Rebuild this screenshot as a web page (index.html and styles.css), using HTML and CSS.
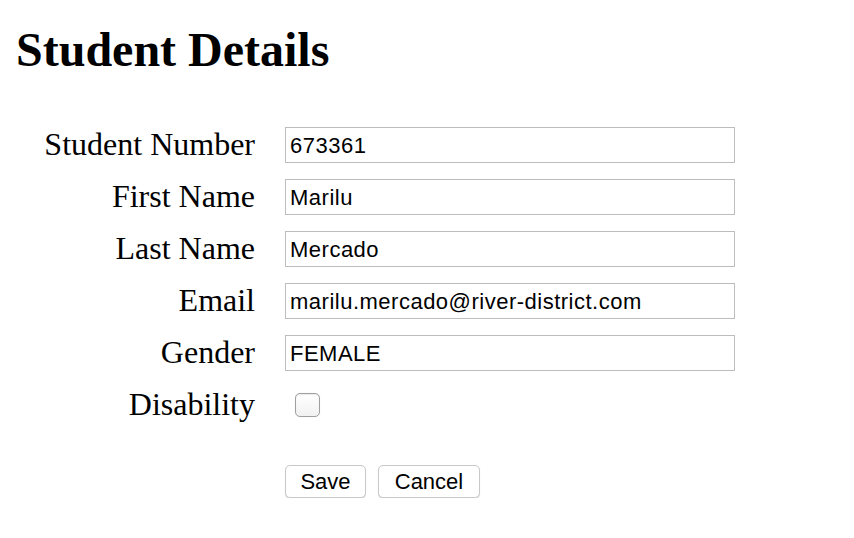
FILE: index.html
```html
<!DOCTYPE html>
<html lang="en">
<head>
<meta charset="utf-8">
<title>Student Details</title>
<link rel="stylesheet" href="styles.css">
</head>
<body>
<h1 class="title">Student Details</h1>
<form class="form">
  <label class="label" for="num">Student Number</label>
  <input class="field" id="num" type="text" value="673361">
  <label class="label" for="first">First Name</label>
  <input class="field" id="first" type="text" value="Marilu">
  <label class="label" for="last">Last Name</label>
  <input class="field" id="last" type="text" value="Mercado">
  <label class="label" for="email">Email</label>
  <input class="field" id="email" type="text" value="marilu.mercado@river-district.com">
  <label class="label" for="gender">Gender</label>
  <input class="field" id="gender" type="text" value="FEMALE">
  <label class="label" for="dis">Disability</label>
  <div class="check-cell"><input class="check" id="dis" type="checkbox"></div>
  <div class="actions">
    <button class="btn btn-save" type="button">Save</button>
    <button class="btn btn-cancel" type="button">Cancel</button>
  </div>
</form>
</body>
</html>
```
FILE: styles.css
```css
html, body {
  margin: 0;
  padding: 0;
  background: #ffffff;
}
body {
  padding: 0 0 0 16px;
  font-family: "Liberation Serif", "Times New Roman", serif;
  color: #000;
}
.title {
  margin: 0;
  padding-top: 22px;
  font-size: 48px;
  line-height: 56px;
  font-weight: bold;
}
.form {
  display: grid;
  grid-template-columns: 239px 450px;
  column-gap: 30px;
  row-gap: 16px;
  margin-top: 49px;
}
.label {
  align-self: start;
  text-align: right;
  font-size: 32px;
  line-height: 34px;
}
.field {
  box-sizing: border-box;
  width: 450px;
  height: 36px;
  margin: 0;
  padding: 2px 4px 0 4px;
  border: 1px solid #bdbdbd;
  border-radius: 0;
  font-family: "Liberation Sans", Arial, sans-serif;
  font-size: 22px;
  letter-spacing: 0.5px;
  color: #000;
  background: #fff;
  outline: none;
}
.check-cell {
  height: 36px;
  display: flex;
  align-items: center;
}
.check {
  appearance: none;
  -webkit-appearance: none;
  box-sizing: border-box;
  width: 25px;
  height: 24px;
  margin: 0 0 0 10px;
  border: 1px solid #9f9f9f;
  border-radius: 5px;
  background: linear-gradient(#ffffff, #f1f1f1);
  box-shadow: inset 0 1px 1px rgba(0,0,0,0.08), 0 0 1px rgba(0,0,0,0.15);
}
.actions {
  grid-column: 2;
  display: flex;
  gap: 12px;
  margin-top: 26px;
}
.btn {
  box-sizing: border-box;
  height: 33px;
  margin: 0;
  padding: 0;
  border: 1px solid #c8c8c8;
  border-radius: 5px;
  background: #ffffff;
  box-shadow: 0 1px 1px rgba(0,0,0,0.15);
  font-family: "Liberation Sans", Arial, sans-serif;
  font-size: 22px;
  color: #000;
}
.btn-save { width: 81px; }
.btn-cancel { width: 102px; }
```
